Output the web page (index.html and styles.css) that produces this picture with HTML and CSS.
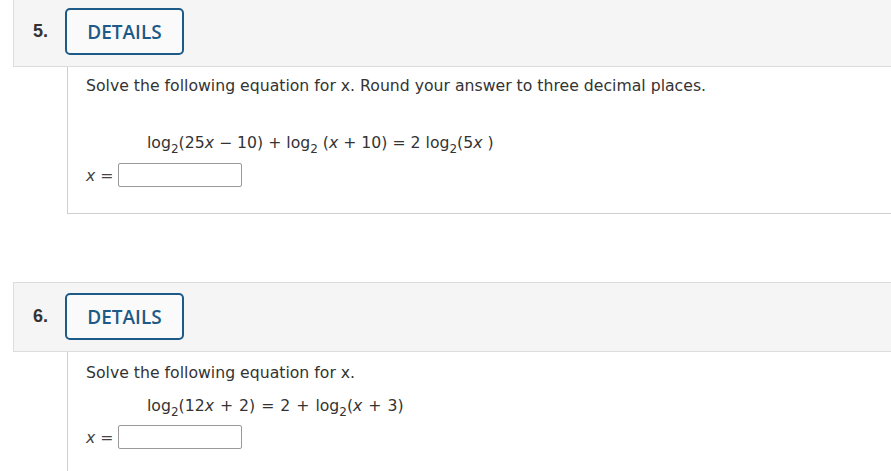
FILE: index.html
```html
<!DOCTYPE html>
<html>
<head>
<meta charset="utf-8">
<link rel="stylesheet" href="styles.css">
</head>
<body>
<div class="page">
  <div class="question first">
    <div class="q-head">
      <span class="q-num">5.</span>
      <button class="details">DETAILS</button>
    </div>
    <div class="q-body">
      <p class="prompt">Solve the following equation for x. Round your answer to three decimal places.</p>
      <div class="equation eq-wide">log<sub>2</sub>(25<i>x</i> &minus; 10) + log<sub>2</sub> (<i>x</i> + 10) = 2 log<sub>2</sub>(5<i>x</i> )</div>
      <div class="answer"><i>x</i> = <span class="input"></span></div>
    </div>
  </div>
  <div class="question second">
    <div class="q-head">
      <span class="q-num">6.</span>
      <button class="details">DETAILS</button>
    </div>
    <div class="q-body">
      <p class="prompt">Solve the following equation for x.</p>
      <div class="equation eq-narrow">log<sub>2</sub>(12<i>x</i> + 2) = 2 + log<sub>2</sub>(<i>x</i> + 3)</div>
      <div class="answer"><i>x</i> = <span class="input"></span></div>
    </div>
  </div>
</div>
</body>
</html>
```
FILE: styles.css
```css
html, body {
  margin: 0;
  padding: 0;
  background: #fff;
}
.page {
  margin-top: -3px;
  font-family: "DejaVu Sans", Verdana, sans-serif;
  color: #333;
}
.question {
  margin-left: 13px;
}
.question.second {
  margin-top: 68px;
}
.q-head {
  display: flex;
  align-items: center;
  background: #f5f5f5;
  border: 1px solid #dcdcdc;
  border-right: none;
  padding: 10px 0 11px 0;
}
.q-num {
  width: 51px;
  padding-left: 19px;
  box-sizing: border-box;
  font-family: "Liberation Sans", Arial, sans-serif;
  font-weight: bold;
  font-size: 18px;
  color: #333;
}
.details {
  width: 119px;
  height: 47px;
  box-sizing: border-box;
  border: 2px solid #1e5a87;
  border-radius: 5px;
  background: #fafafa;
  color: #1e5a87;
  font-family: "Open Sans", sans-serif;
  font-weight: 600;
  font-size: 19px;
  padding: 0;
  margin: 0;
}
.q-body {
  margin-left: 54px;
  border-left: 1px solid #cfcfcf;
  border-bottom: 1px solid #cfcfcf;
  padding: 9px 0 24px 18px;
}
.first .q-body {
  height: 147px;
  box-sizing: border-box;
  padding-bottom: 0;
}
.second .q-body {
  padding-top: 11px;
  padding-bottom: 40px;
}
.prompt {
  margin: 0;
  font-size: 15.7px;
  line-height: 20px;
}
.equation {
  margin: 37px 0 0 61px;
  font-size: 15.7px;
  line-height: 20px;
}
.eq-narrow {
  margin-top: 13px;
  word-spacing: 1px;
}
.equation sub {
  font-size: 12px;
  vertical-align: -5px;
  line-height: 0;
}
.answer {
  display: flex;
  align-items: center;
  margin-top: 10px;
  font-size: 15.7px;
  color: #444;
}
.second .answer {
  margin-top: 9px;
}
.answer i {
  margin-right: 5px;
}
.input {
  display: inline-block;
  width: 124px;
  height: 24px;
  box-sizing: border-box;
  margin-left: 5px;
  border: 1px solid #999;
  border-radius: 2px;
  background: #fff;
}
```
